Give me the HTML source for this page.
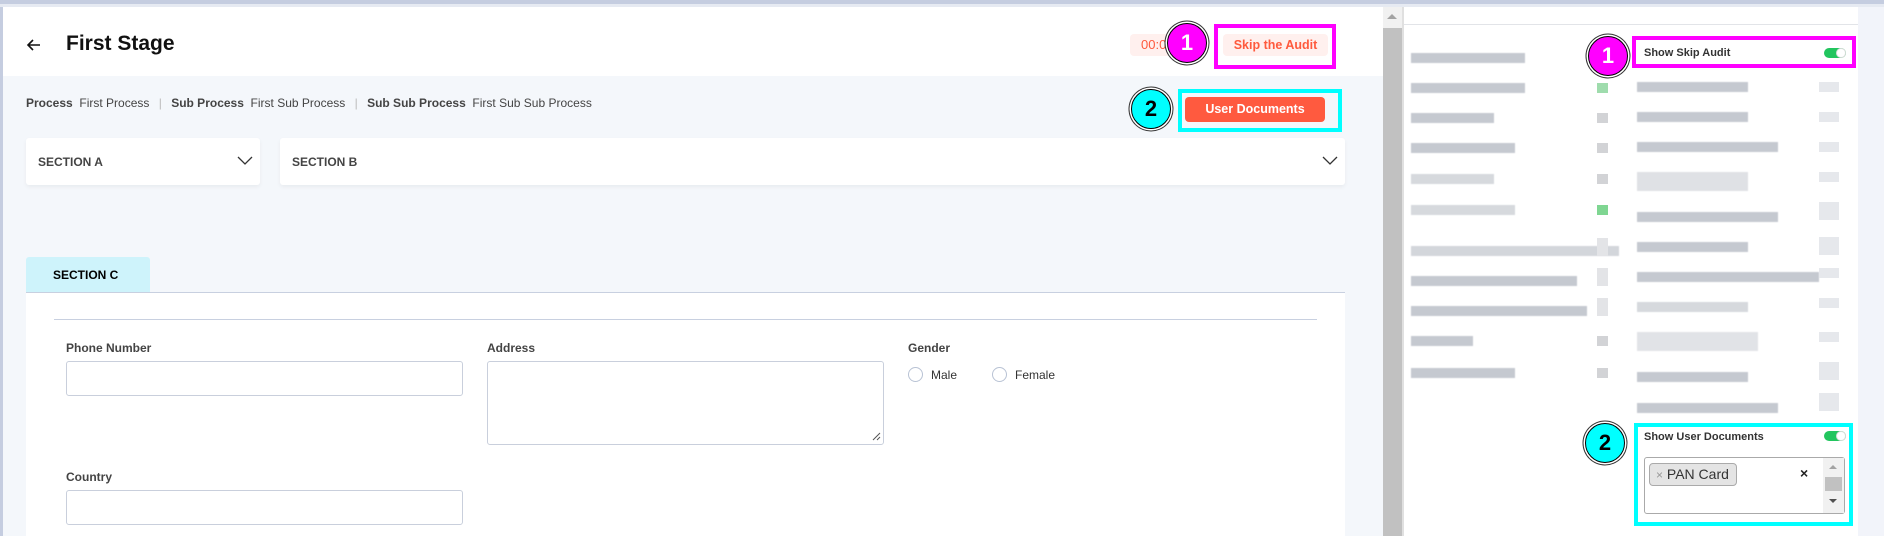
<!DOCTYPE html>
<html><head><meta charset="utf-8"><style>
*{box-sizing:border-box;margin:0;padding:0}
body{width:1884px;height:536px;position:relative;overflow:hidden;background:#f4f7fb;font-family:"Liberation Sans",Arial,sans-serif;color:#333}
.a{position:absolute}
.lbl{font-size:12px;color:#444;font-weight:bold}
.inp{position:absolute;background:#fff;border:1px solid #c9cfdc;border-radius:3px}
.circ{position:absolute;width:40px;height:40px;border-radius:50%;border:1px solid #000;box-shadow:0 0 0 1.5px #fff,0 0 0 2.5px #333;font-weight:bold;font-size:22px;text-align:center;line-height:38px}
.bar{position:absolute;height:10px;background:#c5c9d0;filter:blur(0.6px)}
.bar2{position:absolute;height:10px;background:#e6e8ec}
.sm{position:absolute;width:11px;height:10px;background:#d2d3d6}
.tg{position:absolute;width:22px;height:10px;border-radius:6px;background:#22c55e}
.tg:after{content:"";position:absolute;right:0;top:0;width:10px;height:10px;border-radius:50%;background:#fff;border:1px solid #ddd;box-sizing:border-box}
</style></head><body>
<div class="a" style="left:0;top:0;width:1884px;height:4px;background:#c5cde0"></div>
<div class="a" style="left:0;top:4px;width:1884px;height:3px;background:#e6eaf2"></div>
<div class="a" style="left:0;top:7px;width:3px;height:529px;background:#c5cde0"></div>
<!-- header -->
<div class="a" style="left:3px;top:7px;width:1380px;height:69px;background:#fff"></div>
<svg class="a" style="left:26px;top:37px" width="16" height="16" viewBox="0 0 16 16"><path d="M14 8H2M7 3L2 8l5 5" stroke="#111" stroke-width="1.6" fill="none"/></svg>
<div class="a" style="left:66px;top:32px;font-size:21px;font-weight:bold;color:#111">First Stage</div>
<div class="a" style="left:1130px;top:34px;width:50px;height:22px;background:#fff0ee;border-radius:4px;color:#ff5a3d;font-size:13px;line-height:22px;padding-left:11px">00:0</div>
<div class="a" style="left:1214px;top:24px;width:122px;height:45px;border:4px solid #ff00ff"></div>
<div class="a" style="left:1223px;top:34px;width:105px;height:22px;background:#fff0ee;border-radius:4px;color:#ff5a3d;font-size:12.5px;font-weight:bold;line-height:22px;text-align:center">Skip the Audit</div>
<div class="circ" style="left:1167px;top:23px;background:#ff00ff;color:#fff">1</div>
<!-- breadcrumb -->
<div class="a" style="left:26px;top:96px;font-size:12px;color:#444;white-space:nowrap">
<b>Process</b>&nbsp; First Process <span style="color:#bbb;margin:0 6px">|</span> <b>Sub Process</b>&nbsp; First Sub Process <span style="color:#bbb;margin:0 6px">|</span> <b>Sub Sub Process</b>&nbsp; First Sub Sub Process</div>
<div class="a" style="left:1178px;top:89px;width:164px;height:43px;border:4px solid #00ffff"></div>
<div class="a" style="left:1185px;top:97px;width:140px;height:25px;background:#ff5a3f;border-radius:4px;color:#fff;font-size:12.5px;font-weight:bold;line-height:25px;text-align:center">User Documents</div>
<div class="circ" style="left:1131px;top:89px;background:#00ffff;color:#000">2</div>
<!-- sections -->
<div class="a" style="left:26px;top:138px;width:234px;height:47px;background:#fff;border-radius:3px;box-shadow:0 2px 4px rgba(0,0,0,.05)"></div>
<div class="a lbl" style="left:38px;top:155px">SECTION A</div>
<svg class="a" style="left:237px;top:156px" width="16" height="10"><path d="M1 1l7 7 7-7" stroke="#333" stroke-width="1.3" fill="none"/></svg>
<div class="a" style="left:280px;top:138px;width:1065px;height:47px;background:#fff;border-radius:3px;box-shadow:0 2px 4px rgba(0,0,0,.05)"></div>
<div class="a lbl" style="left:292px;top:155px">SECTION B</div>
<svg class="a" style="left:1322px;top:156px" width="16" height="10"><path d="M1 1l7 7 7-7" stroke="#333" stroke-width="1.3" fill="none"/></svg>
<div class="a" style="left:26px;top:257px;width:124px;height:35px;background:#cef3fb;border-radius:3px 3px 0 0"></div>
<div class="a" style="left:53px;top:268px;font-size:12px;font-weight:bold;color:#000">SECTION C</div>
<div class="a" style="left:26px;top:292px;width:1319px;height:244px;background:#fff;border-top:1.5px solid #c8d0e0"></div>
<div class="a" style="left:54px;top:319px;width:1263px;height:1px;background:#c8d0e0"></div>
<div class="a lbl" style="left:66px;top:341px">Phone Number</div>
<div class="inp" style="left:66px;top:361px;width:397px;height:35px"></div>
<div class="a lbl" style="left:487px;top:341px">Address</div>
<div class="inp" style="left:487px;top:361px;width:397px;height:84px"></div>
<svg class="a" style="left:872px;top:432px" width="9" height="9"><path d="M1 8L8 1M5 8L8 5" stroke="#555" stroke-width="1"/></svg>
<div class="a lbl" style="left:908px;top:341px">Gender</div>
<div class="a" style="left:908px;top:367px;width:15px;height:15px;border:1.5px solid #b8c2d4;border-radius:50%"></div>
<div class="a" style="left:931px;top:368px;font-size:12px;color:#333">Male</div>
<div class="a" style="left:992px;top:367px;width:15px;height:15px;border:1.5px solid #b8c2d4;border-radius:50%"></div>
<div class="a" style="left:1015px;top:368px;font-size:12px;color:#333">Female</div>
<div class="a lbl" style="left:66px;top:470px">Country</div>
<div class="inp" style="left:66px;top:490px;width:397px;height:35px"></div>
<!-- scrollbar -->
<div class="a" style="left:1383px;top:7px;width:19px;height:529px;background:#c1c1c1"></div>
<div class="a" style="left:1383px;top:7px;width:19px;height:21px;background:#f1f1f1"></div>
<div class="a" style="left:1387px;top:14px;width:0;height:0;border-left:5px solid transparent;border-right:5px solid transparent;border-bottom:5px solid #a3a3a3"></div>
<div class="a" style="left:1402px;top:7px;width:2px;height:529px;background:#e0e0e0"></div>
<!-- right panel -->
<div class="a" style="left:1404px;top:7px;width:454px;height:529px;background:#fff"></div>
<div class="a" style="left:1404px;top:24px;width:454px;height:1px;background:#e2e4e8"></div>
<div class="a" style="left:1858px;top:7px;width:26px;height:529px;background:#f2f4fa"></div>
<div class="bar" style="left:1411px;top:53px;width:114px"></div>
<div class="bar" style="left:1411px;top:83px;width:114px"></div>
<div class="bar" style="left:1411px;top:113px;width:83px"></div>
<div class="bar" style="left:1411px;top:143px;width:104px"></div>
<div class="bar" style="left:1411px;top:174px;width:83px;opacity:.7"></div>
<div class="bar" style="left:1411px;top:205px;width:104px;opacity:.7"></div>
<div class="bar" style="left:1411px;top:246px;width:208px;opacity:.75"></div>
<div class="bar" style="left:1411px;top:276px;width:166px"></div>
<div class="bar" style="left:1411px;top:306px;width:176px"></div>
<div class="bar" style="left:1411px;top:336px;width:62px"></div>
<div class="bar" style="left:1411px;top:368px;width:104px"></div>
<div class="sm" style="left:1597px;top:83px;background:#9fdcad"></div>
<div class="sm" style="left:1597px;top:113px"></div>
<div class="sm" style="left:1597px;top:143px"></div>
<div class="sm" style="left:1597px;top:174px"></div>
<div class="sm" style="left:1597px;top:205px;background:#7fd692"></div>
<div class="sm" style="left:1597px;top:238px;height:18px;background:#e3e4e7"></div>
<div class="sm" style="left:1597px;top:268px;height:18px;background:#e3e4e7"></div>
<div class="sm" style="left:1597px;top:298px;height:18px;background:#e3e4e7"></div>
<div class="sm" style="left:1597px;top:336px"></div>
<div class="sm" style="left:1597px;top:368px"></div>
<div class="bar" style="left:1637px;top:82px;width:111px"></div>
<div class="bar" style="left:1637px;top:112px;width:111px"></div>
<div class="bar" style="left:1637px;top:142px;width:141px"></div>
<div class="bar" style="left:1637px;top:172px;width:111px;height:19px;opacity:.55"></div>
<div class="bar" style="left:1637px;top:212px;width:141px"></div>
<div class="bar" style="left:1637px;top:242px;width:111px"></div>
<div class="bar" style="left:1637px;top:272px;width:182px"></div>
<div class="bar" style="left:1637px;top:302px;width:111px;opacity:.7"></div>
<div class="bar" style="left:1637px;top:332px;width:121px;height:19px;opacity:.5"></div>
<div class="bar" style="left:1637px;top:372px;width:111px"></div>
<div class="bar" style="left:1637px;top:403px;width:141px"></div>
<div class="bar2" style="left:1819px;top:82px;width:20px"></div>
<div class="bar2" style="left:1819px;top:112px;width:20px"></div>
<div class="bar2" style="left:1819px;top:142px;width:20px"></div>
<div class="bar2" style="left:1819px;top:172px;width:20px"></div>
<div class="bar2" style="left:1819px;top:202px;width:20px;height:18px"></div>
<div class="bar2" style="left:1819px;top:237px;width:20px;height:18px"></div>
<div class="bar2" style="left:1819px;top:268px;width:20px"></div>
<div class="bar2" style="left:1819px;top:298px;width:20px"></div>
<div class="bar2" style="left:1819px;top:332px;width:20px"></div>
<div class="bar2" style="left:1819px;top:362px;width:20px;height:18px"></div>
<div class="bar2" style="left:1819px;top:393px;width:20px;height:18px"></div>
<div class="a" style="left:1632px;top:36px;width:224px;height:32px;border:4px solid #ff00ff"></div>
<div class="a" style="left:1644px;top:47px;font-size:11px;font-weight:bold;color:#333">Show Skip Audit</div>
<div class="tg" style="left:1824px;top:48px"></div>
<div class="circ" style="left:1588px;top:36px;background:#ff00ff;color:#fff">1</div>
<div class="a" style="left:1634px;top:423px;width:219px;height:103px;border:4px solid #00ffff"></div>
<div class="a" style="left:1644px;top:431px;font-size:11px;font-weight:bold;color:#333">Show User Documents</div>
<div class="tg" style="left:1824px;top:431px"></div>
<div class="a" style="left:1644px;top:457px;width:201px;height:57px;border:1px solid #aaa;border-radius:3px;background:#fff"></div>
<div class="a" style="left:1649px;top:463px;width:88px;height:23px;background:#e4e4e4;border:1px solid #aaa;border-radius:4px;font-size:14px;line-height:21px;padding-left:6px;color:#333;white-space:nowrap"><span style="color:#999;font-size:12px">×</span> PAN Card</div>
<div class="a" style="left:1800px;top:465px;font-size:14px;font-weight:bold;color:#222">×</div>
<div class="a" style="left:1823px;top:458px;width:21px;height:55px;background:#f1f1f1"></div>
<div class="a" style="left:1829px;top:465px;width:0;height:0;border-left:4px solid transparent;border-right:4px solid transparent;border-bottom:4px solid #a3a3a3"></div>
<div class="a" style="left:1825px;top:477px;width:17px;height:14px;background:#c1c1c1"></div>
<div class="a" style="left:1829px;top:499px;width:0;height:0;border-left:4px solid transparent;border-right:4px solid transparent;border-top:4px solid #505050"></div>
<div class="circ" style="left:1585px;top:423px;background:#00ffff;color:#000">2</div>
</body></html>
